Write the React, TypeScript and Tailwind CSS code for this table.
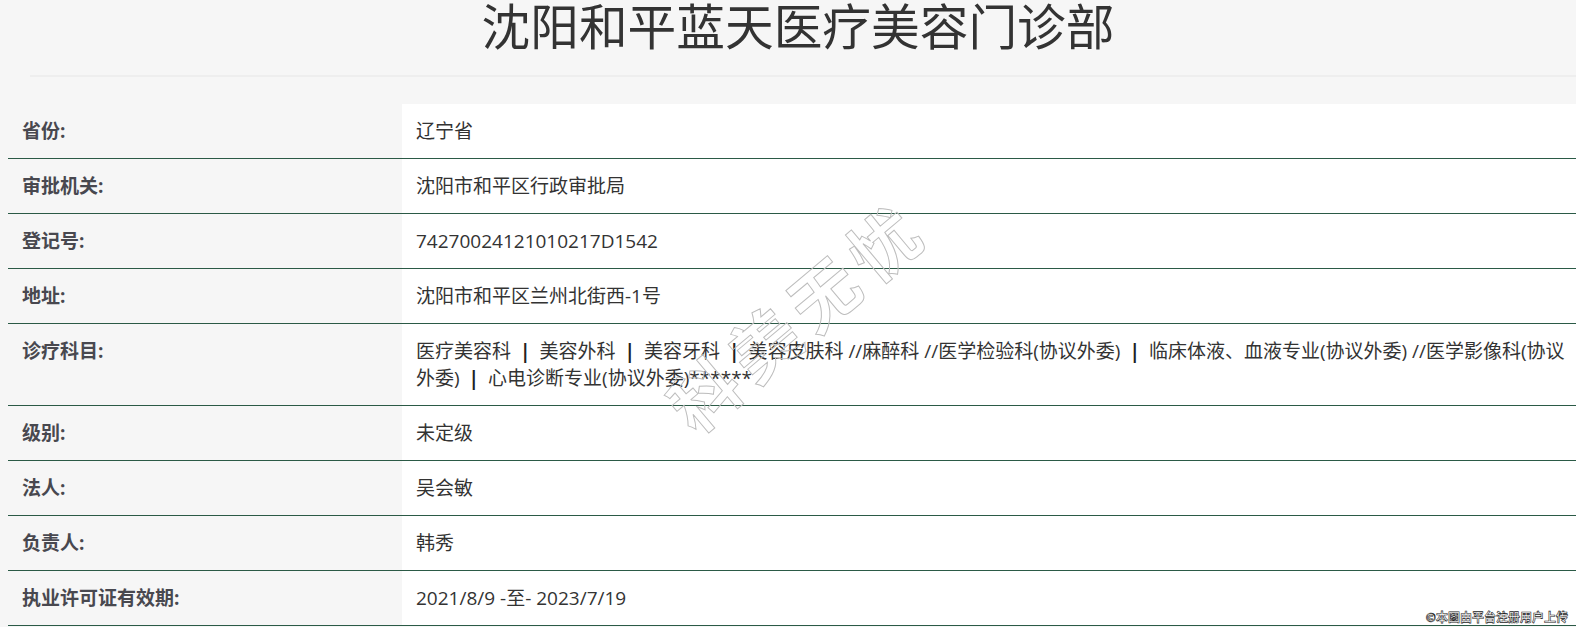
const rows: { label: string; value: React.ReactNode }[] = [
  { label: '省份:', value: '辽宁省' },
  { label: '审批机关:', value: '沈阳市和平区行政审批局' },
  { label: '登记号:', value: '74270024121010217D1542' },
  { label: '地址:', value: '沈阳市和平区兰州北街西-1号' },
  {
    label: '诊疗科目:',
    value: (
      <>
        医疗美容科<Bar />美容外科<Bar />美容牙科<Bar />美容皮肤科 //麻醉科 //医学检验科(协议外委)<Bar />
        临床体液、血液专业(协议外委) //医学影像科(协议外委)<Bar />心电诊断专业(协议外委)******
      </>
    ),
  },
  { label: '级别:', value: '未定级' },
  { label: '法人:', value: '吴会敏' },
  { label: '负责人:', value: '韩秀' },
  { label: '执业许可证有效期:', value: '2021/8/9 -至- 2023/7/19' },
]

function Bar() {
  return <span className="mx-[9px] font-bold text-[#222]">|</span>
}

export default function App() {
  return (
    <div className="relative h-[627px] overflow-hidden bg-[#f6f6f6] font-['Open_Sans','Noto_Sans_CJK_SC',sans-serif] text-[#333]">
      <h1 className="pl-[20px] text-center text-[48.7px] leading-[52px] font-normal text-[#333]">
        沈阳和平蓝天医疗美容门诊部
      </h1>
      <div className="mt-[23px] ml-[30px] h-[2px] bg-[#eeeeee]" />
      <div className="mt-[27px] ml-2 w-[1568px]">
        {rows.map((row) => (
          <div key={row.label} className="flex border-b border-[#2b5a46]">
            <div className="w-[394px] shrink-0 py-[13.5px] pl-[14px] text-[19px] leading-[27px] font-bold text-[#48484f]">
              {row.label}
            </div>
            <div className="flex-1 bg-white py-[13.5px] pr-[6px] pl-[14px] text-[19px] leading-[27px] text-[#333]">
              {row.value}
            </div>
          </div>
        ))}
      </div>
      <div className="pointer-events-none absolute top-[280px] left-[640px] rotate-[-40deg] text-[68px] leading-none font-bold tracking-[10px] text-transparent [-webkit-text-stroke:1px_#bdbdbd] font-['Noto_Sans_CJK_SC',sans-serif]">
        科美无忧
      </div>
      <div className="absolute right-[8px] bottom-[4px] text-[12px] leading-none font-bold text-white [-webkit-text-stroke:0.6px_#222] font-['Noto_Sans_CJK_SC',sans-serif]">
        ©本图由平台注册用户上传
      </div>
    </div>
  )
}
